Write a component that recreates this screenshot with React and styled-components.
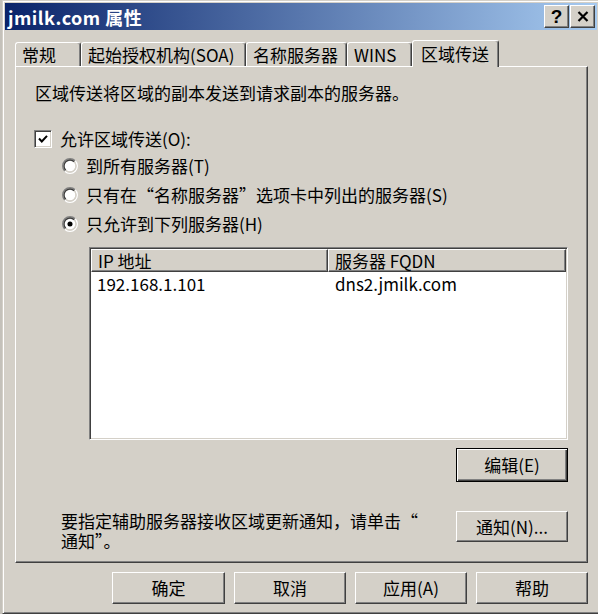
import styled, { createGlobalStyle } from "styled-components";

const GlobalStyle = createGlobalStyle`
  html, body {
    margin: 0;
    padding: 0;
  }
  body {
    width: 598px;
    height: 614px;
    overflow: hidden;
    background: #c4c1ba;
    font-family: "Noto Sans CJK SC", sans-serif;
    font-size: 17px;
    line-height: 20px;
    color: #000;
  }
`;

const Window = styled.div`
  box-sizing: border-box;
  margin-left: 2px;
  width: 598px;
  height: 614px;
  background: #d4d0c8;
  border: 1px solid;
  border-color: #d4d0c8 #404040 #404040 #d4d0c8;
  box-shadow: inset 1px 1px #fff, inset -1px -1px #808080;
  padding: 2px;
  display: flex;
  flex-direction: column;
`;

const TitleBar = styled.div`
  height: 27px;
  display: flex;
  align-items: center;
  padding: 0 2px 0 3px;
  background: linear-gradient(to right, #0a246a, #a6caf0);
`;

const Title = styled.div`
  flex: 1;
  color: #fff;
  font-weight: 700;
  font-size: 18px;
  letter-spacing: 0.5px;
`;

const CaptionButton = styled.div`
  box-sizing: border-box;
  width: 25px;
  height: 23px;
  margin-left: 1px;
  display: flex;
  align-items: center;
  justify-content: center;
  background: #d4d0c8;
  border: 1px solid;
  border-color: #fff #404040 #404040 #fff;
  box-shadow: inset -1px -1px #808080;
  font-family: "Liberation Sans", sans-serif;
  font-weight: 700;
  font-size: 19px;
`;

const Body = styled.div`
  flex: 1;
  display: flex;
  flex-direction: column;
  padding: 10px 9px 0 10px;
`;

const TabRow = styled.div`
  display: flex;
  align-items: flex-end;
  height: 26px;
  position: relative;
  z-index: 2;
`;

const Tab = styled.div`
  box-sizing: border-box;
  width: ${(p) => p.$w}px;
  height: ${(p) => (p.$active ? 27 : 24)}px;
  margin-bottom: ${(p) => (p.$active ? -1 : 0)}px;
  padding-left: ${(p) => (p.$active ? 8 : 6)}px;
  display: flex;
  align-items: center;
  white-space: nowrap;
  background: #d4d0c8;
  border: 1px solid;
  border-bottom: none;
  border-color: #fff #404040 transparent #fff;
  border-radius: 3px 3px 0 0;
  box-shadow: inset -1px 0 #808080;
`;

const Panel = styled.div`
  box-sizing: border-box;
  height: 497px;
  border: 1px solid;
  border-color: #fff #404040 #404040 #fff;
  box-shadow: inset -1px -1px #808080;
  padding: 16px 19px 0 19px;
  display: flex;
  flex-direction: column;
`;

const CheckRow = styled.div`
  display: flex;
  align-items: center;
  gap: 8px;
  height: 18px;
  margin-top: 27px;
  margin-left: -1px;
`;

const Box = styled.div`
  box-sizing: border-box;
  width: 18px;
  height: 18px;
  background: #fff;
  border: 1px solid;
  border-color: #808080 #fff #fff #808080;
  box-shadow: inset 1px 1px #404040, inset -1px -1px #d4d0c8;
  display: flex;
  align-items: center;
  justify-content: center;
`;

const RadioGroup = styled.div`
  display: flex;
  flex-direction: column;
  gap: 9px;
  margin-top: 8px;
  padding-left: 27px;
`;

const RadioRow = styled.div`
  display: flex;
  align-items: center;
  gap: 8px;
  height: 20px;
`;

const ListView = styled.div`
  box-sizing: border-box;
  height: 193px;
  margin: 4px 0 0 27px;
  background: #fff;
  border: 1px solid;
  border-color: #808080 #fff #fff #808080;
  box-shadow: inset 1px 1px #404040, inset -1px -1px #d4d0c8;
  padding: 1px;
`;

const ListRow = styled.div`
  display: grid;
  grid-template-columns: 237px 1fr;
`;

const HeaderCell = styled.div`
  box-sizing: border-box;
  height: 23px;
  padding-left: 6px;
  display: flex;
  align-items: center;
  background: #d4d0c8;
  border: 1px solid;
  border-color: #fff #404040 #404040 #fff;
  box-shadow: inset -1px -1px #808080;
`;

const Cell = styled.div`
  padding: 2px 0 0 ${(p) => p.$pad}px;
  height: 20px;
`;

const Button = styled.div`
  box-sizing: border-box;
  width: ${(p) => p.$w || 112}px;
  height: ${(p) => p.$h || 32}px;
  display: flex;
  align-items: center;
  justify-content: center;
  background: #d4d0c8;
  border: 1px solid;
  border-color: ${(p) => (p.$default ? "#000" : "#fff #404040 #404040 #fff")};
  box-shadow: ${(p) =>
    p.$default
      ? "inset 1px 1px #fff, inset -1px -1px #404040, inset -2px -2px #808080"
      : "inset -1px -1px #808080"};
`;

const EditRow = styled.div`
  display: flex;
  justify-content: flex-end;
  margin-top: 8px;
`;

const NotifyRow = styled.div`
  display: flex;
  justify-content: space-between;
  align-items: flex-start;
  margin-top: 29px;
  padding-left: 26px;
`;

const Footer = styled.div`
  display: flex;
  justify-content: flex-end;
  gap: 9px;
  margin-top: 9px;
`;

function Radio({ checked }) {
  const d = (r) => {
    const k = r * 0.7071;
    return [6 - k, 6 + k, 6 + k, 6 - k];
  };
  const [ax, ay, bx, by] = d(5.5);
  const [cx, cy, ex, ey] = d(4.5);
  return (
    <svg width="16" height="16" viewBox="0 0 12 12">
      <circle cx="6" cy="6" r="4.2" fill="#fff" />
      <path d={`M${ax} ${ay} A5.5 5.5 0 0 1 ${bx} ${by}`} stroke="#808080" fill="none" />
      <path d={`M${bx} ${by} A5.5 5.5 0 0 1 ${ax} ${ay}`} stroke="#fff" fill="none" />
      <path d={`M${cx} ${cy} A4.5 4.5 0 0 1 ${ex} ${ey}`} stroke="#404040" fill="none" />
      <path d={`M${ex} ${ey} A4.5 4.5 0 0 1 ${cx} ${cy}`} stroke="#d4d0c8" fill="none" />
      {checked && <circle cx="6" cy="6" r="1.9" fill="#000" />}
    </svg>
  );
}

export default function App() {
  return (
    <>
      <GlobalStyle />
      <Window>
        <TitleBar>
          <Title>jmilk.com 属性</Title>
          <CaptionButton>?</CaptionButton>
          <CaptionButton>
            <svg width="12" height="11" viewBox="0 0 12 11">
              <path d="M1.5 1 L10.5 10 M10.5 1 L1.5 10" stroke="#000" strokeWidth="2.2" />
            </svg>
          </CaptionButton>
        </TitleBar>
        <Body>
          <TabRow>
            <Tab $w={66}>常规</Tab>
            <Tab $w={165}>起始授权机构(SOA)</Tab>
            <Tab $w={101}>名称服务器</Tab>
            <Tab $w={65}>WINS</Tab>
            <Tab $w={87} $active>区域传送</Tab>
          </TabRow>
          <Panel>
            <div>区域传送将区域的副本发送到请求副本的服务器。</div>
            <CheckRow>
              <Box>
                <svg width="12" height="12" viewBox="0 0 12 12">
                  <path d="M2 5.5 L4.8 8.5 L10 2.8" stroke="#000" strokeWidth="2" fill="none" />
                </svg>
              </Box>
              <span>允许区域传送(O):</span>
            </CheckRow>
            <RadioGroup>
              <RadioRow>
                <Radio />
                <span>到所有服务器(T)</span>
              </RadioRow>
              <RadioRow>
                <Radio />
                <span>只有在“名称服务器”选项卡中列出的服务器(S)</span>
              </RadioRow>
              <RadioRow>
                <Radio checked />
                <span>只允许到下列服务器(H)</span>
              </RadioRow>
              <ListView>
                <ListRow>
                  <HeaderCell>IP 地址</HeaderCell>
                  <HeaderCell>服务器 FQDN</HeaderCell>
                </ListRow>
                <ListRow>
                  <Cell $pad={6}>192.168.1.101</Cell>
                  <Cell $pad={7}>dns2.jmilk.com</Cell>
                </ListRow>
              </ListView>
            </RadioGroup>
            <EditRow>
              <Button $h={34} $default>编辑(E)</Button>
            </EditRow>
            <NotifyRow>
              <div>
                要指定辅助服务器接收区域更新通知，请单击“
                <br />
                通知”。
              </div>
              <Button $h={31}>通知(N)...</Button>
            </NotifyRow>
          </Panel>
          <Footer>
            <Button $w={113}>确定</Button>
            <Button>取消</Button>
            <Button>应用(A)</Button>
            <Button>帮助</Button>
          </Footer>
        </Body>
      </Window>
    </>
  );
}
